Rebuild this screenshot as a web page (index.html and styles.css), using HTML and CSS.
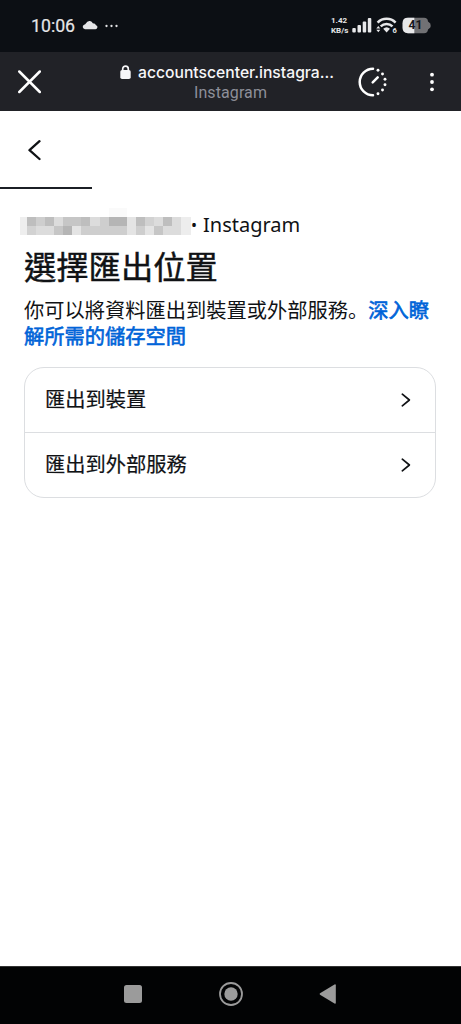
FILE: index.html
```html
<!DOCTYPE html>
<html lang="zh-Hant">
<head>
<meta charset="utf-8">
<meta name="viewport" content="width=device-width, initial-scale=1">
<title>選擇匯出位置</title>
<link rel="stylesheet" href="styles.css">
</head>
<body>
<div class="phone">
  <div class="status">
    <span class="clock">10:06</span>
    <svg class="cloud" width="16" height="10" viewBox="0 0 16 10"><path d="M3 9.200A2.300 2.300 0 0 1 2.100 4.800Q3.500 4.500 3.800 3.500 5.200.6 8 1 10 1.500 10.800 3.300 13.500 3.500 14 5.300 15.800 5.800 15.400 7.600 15 9.200 13.500 9.200Z" fill="#e6e6e8"/></svg>
    <svg class="more" width="14" height="4" viewBox="0 0 14 4" fill="#e2e2e4"><circle cx="1.500" cy="2" r="1.150"/><circle cx="6.500" cy="2" r="1.150"/><circle cx="11.500" cy="2" r="1.150"/></svg>
    <span class="spacer"></span>
    <span class="rate"><span>1.42</span><span>KB/s</span></span>
    <svg class="signal" width="20" height="16" viewBox="0 0 20 16" fill="#e8e8ea"><rect x="0.300" y="11" width="3.500" height="4.500" rx="1"/><rect x="5.500" y="8" width="3.500" height="7.500" rx="1"/><rect x="10.700" y="4.500" width="3.500" height="11" rx="1"/><rect x="15.800" y="1" width="3.500" height="14.500" rx="1"/></svg>
    <svg class="wifi" width="22" height="17" viewBox="0 0 22 17"><g fill="none" stroke="#e8e8ea" stroke-width="2.500"><path d="M1.600 5.600a12.600 12.600 0 0 1 18 0"/><path d="M4.700 9.300a8.400 8.400 0 0 1 11.800 0"/></g><path d="M7.200 11.800a5 5 0 0 1 6.800 0L10.600 15.500ZM2.300 9.100l2 2.500H.3ZM2.300 15.300l2-2.500H.3Z" fill="#e8e8ea"/><text x="16.500" y="15.500" class="wifi-gen">6</text></svg>
    <span class="battery"><svg width="30" height="17" viewBox="0 0 30 17"><path d="M6 .8H22Q25.800.8 26 4.500L28.300 6.500Q29 8.500 28.300 10.500L26 12.500Q25.800 16.200 22 16.200H6Q.6 16.200.6 10.800V6.200Q.6.8 6 .8Z" fill="#717174"/><path d="M12.300.8H6Q.6.8.6 6.200V10.800Q.6 16.200 6 16.200H12.300Z" fill="#e8e8ea"/></svg><b>41</b></span>
  </div>
  <div class="browser">
    <svg class="close" width="24" height="24" viewBox="0 0 24 24" stroke="#fff" stroke-width="2.500" stroke-linecap="round"><path d="M2.300 1.500l20.500 20.500M22.800 1.500L2.300 22"/></svg>
    <div class="address">
      <div class="host"><svg width="11" height="15" viewBox="0 0 11 15"><path d="M2.700 6V3.900a2.800 2.800 0 0 1 5.600 0V6" fill="none" stroke="#f6f6f8" stroke-width="1.700"/><rect x=".3" y="5" width="10.400" height="9" rx="1.800" fill="#f6f6f8"/></svg><span>accountscenter.instagra...</span></div>
      <div class="site">Instagram</div>
    </div>
    <svg class="timer" width="30" height="30" viewBox="0 0 30 30"><path d="M15 1.700a13.200 13.200 0 0 0 0 26.600M14.700 15.300l5-5" fill="none" stroke="#fff" stroke-width="2.500" stroke-linecap="round"/><g fill="#fff"><circle cx="20" cy="3.200" r="1.450"/><circle cx="24.500" cy="7" r="1.450"/><circle cx="27" cy="12.300" r="1.450"/><circle cx="27" cy="17.700" r="1.450"/><circle cx="24.500" cy="23" r="1.450"/><circle cx="20" cy="26.800" r="1.450"/></g></svg>
    <svg class="kebab" width="6" height="20" viewBox="0 0 6 20" fill="#fff"><circle cx="3" cy="2.700" r="1.900"/><circle cx="3" cy="10" r="1.900"/><circle cx="3" cy="17.300" r="1.900"/></svg>
  </div>
  <main>
    <div class="nav"><svg width="14" height="22" viewBox="0 0 14 22"><path d="M12.500 2.200L2.500 11.200L12.500 20" fill="none" stroke="#101215" stroke-width="2.300" stroke-linecap="round" stroke-linejoin="round"/></svg></div>
    <div class="progress"></div>
    <div class="account">
      <svg class="mosaic" width="171" height="28" viewBox="0 0 171 28" shape-rendering="crispEdges">
        <path d="M89 0h18v9H89Z" fill="#fafafa"/>
        <path d="M0 9h171v18H0Z" fill="#dcdcdc"/>
        <path d="M0 9h7v18H0Z" fill="#eeeeee"/>
        <path d="M7 9h9v9H7ZM25 9h9v9H25ZM61 9h9v9H61ZM116 9h9v9H116ZM143 9h9v9H143Z" fill="#bebebe"/>
        <path d="M43 9h18v9H43ZM34 18h9v9H34ZM134 18h9v9H134Z" fill="#c6c6c6"/>
        <path d="M89 9h18v9H89ZM43 18h9v9H43Z" fill="#b5b5b5"/>
        <path d="M61 18h28v9H61ZM89 18h18v9H89ZM116 18h9v9H116ZM16 9h9v9H16ZM80 9h9v9H80Z" fill="#cecece"/>
        <path d="M52 18h9v9H52ZM107 9h9v18H107ZM125 18h9v9H125Z" fill="#e4e4e4"/>
        <path d="M7 18h9v9H7ZM125 9h9v9H125Z" fill="#d2d2d2"/>
        <path d="M161 9h10v18H161Z" fill="#ededed"/>
      </svg><span class="dot">•</span><span>Instagram</span>
    </div>
    <h1>選擇匯出位置</h1>
    <p lang="zh-Hans">你可以將資料匯出到裝置或外部服務。<a>深入瞭解所需的儲存空間</a></p>
    <div class="list">
      <div class="row"><span>匯出到裝置</span><svg width="10" height="14" viewBox="0 0 10 14"><path d="M1.300 1.200L8.400 7L1.300 12.800" fill="none" stroke="#101215" stroke-width="1.700" stroke-linecap="round" stroke-linejoin="round"/></svg></div>
      <div class="row"><span>匯出到外部服務</span><svg width="10" height="14" viewBox="0 0 10 14"><path d="M1.300 1.200L8.400 7L1.300 12.800" fill="none" stroke="#101215" stroke-width="1.700" stroke-linecap="round" stroke-linejoin="round"/></svg></div>
    </div>
  </main>
  <div class="system">
    <svg width="18" height="18" viewBox="0 0 18 18"><rect width="18" height="18" rx="2.500" fill="#9b9b9b"/></svg>
    <svg width="24" height="24" viewBox="0 0 24 24"><circle cx="12" cy="12" r="11" fill="none" stroke="#9b9b9b" stroke-width="1.800"/><circle cx="12" cy="12" r="6.700" fill="#9b9b9b"/></svg>
    <svg width="18" height="20" viewBox="0 0 18 20"><path d="M1 9.300L15.500.4Q16.800 0 16.800 1.200V18.800Q16.800 20 15.500 19.600L1 10.700Q.2 10 1 9.300Z" fill="#9b9b9b"/></svg>
  </div>
</div>
</body>
</html>
```
FILE: styles.css
```css
* { box-sizing: border-box; }
body { margin: 0; background: #fff; font-family: Roboto, "Noto Sans CJK SC", sans-serif; }
svg { display: block; flex: none; }
.phone { width: 461px; height: 1024px; display: flex; flex-direction: column; overflow: hidden; }
.status { height: 52px; flex: none; background: #0c0f14; display: flex; align-items: center; padding: 0 31px; color: #e6e6e8; }
.clock { font-size: 17.700px; line-height: 20px; font-weight: 400; -webkit-text-stroke: 0.200px; width: 51px; }
.cloud { margin-top: -2px; }
.more { margin: -1px 0 0 7px; }
.spacer { flex: 1; }
.rate { display: flex; flex-direction: column; font-size: 8px; line-height: 10px; font-weight: 700; width: 21px; white-space: nowrap; }
.signal { margin-left: 0; margin-top: -2px; }
.wifi { margin-left: 4px; margin-top: -1px; }
.wifi-gen { font: 700 7.500px Roboto, sans-serif; fill: #e8e8ea; }
.battery { position: relative; margin-left: 4px; margin-right: -2px; margin-top: -2px; }
.battery b { position: absolute; inset: 0; font-size: 12px; line-height: 17px; text-align: center; color: #15171b; padding-right: 3px; }
.browser { height: 59px; flex: none; background: #212227; display: flex; align-items: center; padding: 0 26px 0 17px; }
.address { width: 215px; margin-left: 78px; padding-top: 2px; }
.host { display: flex; align-items: center; gap: 7px; height: 20px; color: #f6f6f8; font: 500 15.700px/20px Inter, sans-serif; white-space: nowrap; }
.site { text-align: center; padding-left: 8px; color: #8d8f99; font-size: 16px; line-height: 20px; letter-spacing: 0.100px; }
.host svg { margin-left: 1px; }
.timer { margin-left: 24px; }
.kebab { margin-left: auto; }
main { flex: 1; color: #101215; }
.nav { height: 76px; padding: 28px 0 0 27px; }
.progress { width: 92px; height: 2px; background: #1b1f25; }
.account { height: 28px; margin: 19px 0 0 20px; display: flex; align-items: flex-start; font: 20px/34px "Noto Sans", sans-serif; }
.dot { width: 12px; font-size: 16px; }
h1 { margin: 10px 24px 0; font: 400 32.300px/38px "Noto Sans CJK SC", sans-serif; -webkit-text-stroke: 0.450px; white-space: nowrap; }
p { margin: 13px 24px 0; font: 400 20.250px/26px "Noto Sans CJK SC", sans-serif; width: 412px; }
a { color: #0064d8; font-weight: 400; -webkit-text-stroke: 0.600px; }
.list { margin: 18px 25px 0 24px; border: 1px solid #dcdee1; border-radius: 20px; height: 131px; }
.row { height: 64px; display: flex; align-items: center; justify-content: space-between; padding: 0 24px 0 20px; font: 400 20.250px/28px "Noto Sans CJK SC", sans-serif; -webkit-text-stroke: 0.200px; }
.row span { margin-top: -2px; }
.row + .row { border-top: 1px solid #dcdee1; height: 65px; }
.system { height: 58px; flex: none; background: #020304; border-top: 1px solid #333; display: flex; align-items: center; justify-content: space-between; padding: 0 124px 4px; }
```
